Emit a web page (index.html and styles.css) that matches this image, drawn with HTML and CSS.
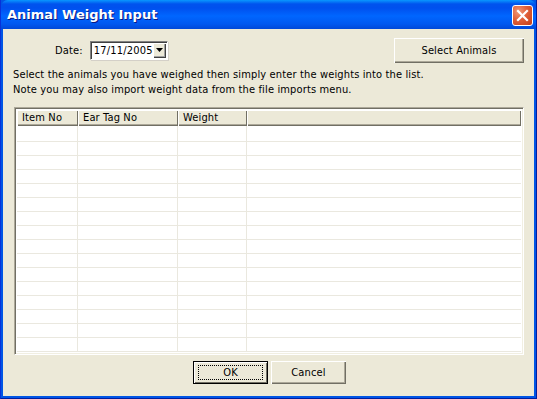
FILE: index.html
```html
<!DOCTYPE html>
<html>
<head>
<meta charset="utf-8">
<link rel="stylesheet" href="styles.css">
</head>
<body>
<div class="window">
  <div class="titlebar">
    <span class="title">Animal Weight Input</span>
    <div class="close">
      <svg width="13" height="13" viewBox="0 0 13 13"><path d="M2 2 L11 11 M11 2 L2 11" stroke="#fff" stroke-width="2.2" stroke-linecap="square"/></svg>
    </div>
  </div>
  <div class="client">
    <div class="toprow">
      <div class="dategroup">
        <span class="datelabel">Date:</span>
        <div class="combo">
          <span class="comboval">17/11/2005</span>
          <span class="combobtn"><svg width="7" height="4" viewBox="0 0 7 4"><path d="M0 0 H7 L3.5 4 Z" fill="#000"/></svg></span>
        </div>
      </div>
      <button class="btn selbtn">Select Animals</button>
    </div>
    <p class="info">Select the animals you have weighed then simply enter the weights into the list.<br>Note you may also import weight data from the file imports menu.</p>
    <div class="list">
      <div class="header">
        <div class="hcell c1">Item No</div>
        <div class="hcell c2">Ear Tag No</div>
        <div class="hcell c3">Weight</div>
        <div class="hcell c4"></div>
      </div>
      <div class="rows"></div>
    </div>
    <div class="btnrow">
      <button class="btn okbtn"><span class="focus">OK</span></button>
      <button class="btn">Cancel</button>
    </div>
  </div>
</div>
</body>
</html>
```
FILE: styles.css
```css
* { box-sizing: border-box; }
html, body { margin: 0; padding: 0; }
body { width: 537px; height: 399px; overflow: hidden; background: #ECE9D8; }
.window {
  width: 537px; height: 399px;
  display: flex; flex-direction: column;
  background: #0055E5;
  border-left: 1px solid #0831D9;
  border-right: 1px solid #001EA0;
  border-bottom: 1px solid #001EA0;
  font-family: "DejaVu Sans Condensed", "DejaVu Sans", sans-serif;
  font-size: 11px;
  letter-spacing: 0.14px;
  color: #000;
}
.titlebar {
  height: 29px; flex: none;
  display: flex; align-items: center; justify-content: space-between;
  padding: 0 3px 0 6px;
  background: linear-gradient(to bottom, #0997FF 0px, #0053EE 4px, #0050EE 8px, #0066FF 16px, #0058F0 24px, #0048D8 29px);
  border-radius: 7px 7px 0 0;
}
.title {
  color: #fff; font-weight: bold; font-size: 13px;
  font-family: "DejaVu Sans", sans-serif;
  text-shadow: 1px 1px 0 #0A1883;
  letter-spacing: 0;
}
.close {
  width: 21px; height: 21px; margin-top: 2px;
  border: 1px solid #fff; border-radius: 3px;
  background: radial-gradient(circle at 30% 30%, #F09A7A 0%, #E0603A 45%, #C43D17 100%);
  display: flex; align-items: center; justify-content: center;
}
.client {
  flex: 1; margin: 0 2px 2px 2px;
  background: #ECE9D8;
  display: flex; flex-direction: column;
  padding: 8px 10px 0 11px;
}
.toprow { display: flex; justify-content: space-between; align-items: center; height: 26px; }
.dategroup { display: flex; align-items: center; margin-left: 41px; }
.datelabel { margin-right: 7px; }
.combo {
  width: 78px; height: 19px; display: flex; align-items: center; justify-content: space-between;
  background: #fff;
  border-top: 1px solid #808080; border-left: 1px solid #808080;
  border-right: 1px solid #fff; border-bottom: 1px solid #fff;
  box-shadow: inset 1px 1px 0 #404040, 1px 1px 0 #D4D0C8;
  padding: 0 1px 0 3px;
}
.comboval { padding-top: 1px; letter-spacing: 0.2px; }
.combobtn {
  width: 15px; height: 15px; background: #ECE9D8;
  display: flex; align-items: center; justify-content: center;
  box-shadow: inset 1px 1px 0 #fff, inset -1px -1px 0 #404040, inset -2px -2px 0 #A0A0A0;
}
.btn {
  font-family: inherit; font-size: 11px; color: #000; letter-spacing: 0.14px;
  background: #ECE9D8;
  border: none;
  box-shadow: inset 1px 1px 0 #fff, inset -1px -1px 0 #716F64, inset -2px -2px 0 #ACA899;
  padding: 0;
}
.selbtn { width: 130px; height: 25px; }
.info { margin: 4px 0 0 -1px; line-height: 15px; height: 32px; }
.list {
  margin-top: 8px;
  height: 248px;
  background: #fff;
  border-top: 1px solid #ACA899; border-left: 1px solid #ACA899;
  border-right: 1px solid #fff; border-bottom: 1px solid #fff;
  box-shadow: inset 1px 1px 0 #716F64, inset -1px -1px 0 #F1EFE2;
  padding: 2px 2px 2px 2px;
  display: flex; flex-direction: column;
  overflow: hidden;
}
.header { display: flex; height: 16px; flex: none; }
.hcell {
  background: #ECE9D8;
  box-shadow: inset 1px 1px 0 #fff, inset -1px -1px 0 #716F64, inset -1px -2px 0 #ACA899;
  padding: 1px 0 0 5px; line-height: 14px;
}
.c1 { width: 61px; }
.c2 { width: 100px; }
.c3 { width: 69px; }
.c4 { flex: 1; }
.rows {
  flex: 1;
  background-color: #fff;
  background-image:
    linear-gradient(to right, transparent 60px, #EAE8DF 60px, #EAE8DF 61px, transparent 61px, transparent 160px, #EAE8DF 160px, #EAE8DF 161px, transparent 161px, transparent 229px, #EAE8DF 229px, #EAE8DF 230px, transparent 230px),
    repeating-linear-gradient(to bottom, transparent 0, transparent 13px, #EAE8DF 13px, #EAE8DF 14px);
  background-position: 0 2px;
}
.btnrow { display: flex; justify-content: center; gap: 3px; margin-top: 6px; padding-left: 1px; }
.btnrow .btn { width: 75px; height: 23px; }
.okbtn {
  border: 1px solid #000;
  box-shadow: inset 1px 1px 0 #fff, inset -1px -1px 0 #716F64;
  display: flex; align-items: center; justify-content: center;
}
.focus {
  width: 65px; height: 15px; border: 1px dotted #000;
  display: flex; align-items: center; justify-content: center;
}
```
